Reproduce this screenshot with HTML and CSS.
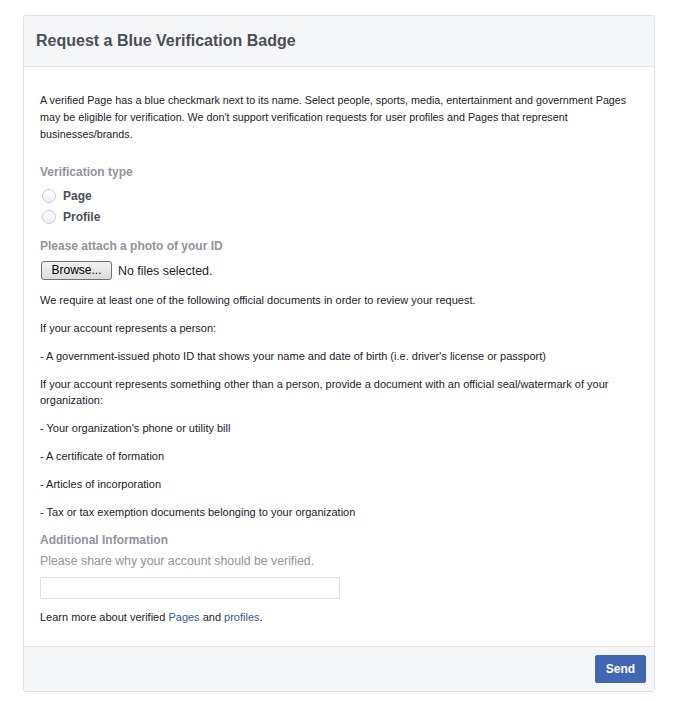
FILE: index.html
```html
<!DOCTYPE html>
<html>
<head>
<meta charset="utf-8">
<link rel="stylesheet" href="styles.css">
</head>
<body>
<div class="card">
  <div class="card-header">
    <h2 class="title">Request a Blue Verification Badge</h2>
  </div>
  <div class="card-body">
    <p class="intro">A verified Page has a blue checkmark next to its name. Select people, sports, media, entertainment and government Pages may be eligible for verification. We don't support verification requests for user profiles and Pages that represent businesses/brands.</p>

    <div class="label">Verification type</div>
    <div class="radios">
      <label class="radio-row"><span class="radio"></span><span class="radio-text">Page</span></label>
      <label class="radio-row"><span class="radio"></span><span class="radio-text">Profile</span></label>
    </div>

    <div class="label label-2">Please attach a photo of your ID</div>
    <div class="file-row">
      <span class="browse">Browse...</span>
      <span class="file-text">No files selected.</span>
    </div>

    <div class="docs">
      <p>We require at least one of the following official documents in order to review your request.</p>
      <p>If your account represents a person:</p>
      <p>- A government-issued photo ID that shows your name and date of birth (i.e. driver's license or passport)</p>
      <p>If your account represents something other than a person, provide a document with an official seal/watermark of your organization:</p>
      <p>- Your organization's phone or utility bill</p>
      <p>- A certificate of formation</p>
      <p>- Articles of incorporation</p>
      <p>- Tax or tax exemption documents belonging to your organization</p>
    </div>

    <div class="label label-3">Additional Information</div>
    <div class="hint">Please share why your account should be verified.</div>
    <div class="text-input"></div>

    <p class="learn">Learn more about verified <a href="#">Pages</a> and <a href="#">profiles</a>.</p>
  </div>
  <div class="card-footer">
    <button class="send">Send</button>
  </div>
</div>
</body>
</html>
```

FILE: styles.css
```css
html, body {
  margin: 0;
  padding: 0;
  background: #ffffff;
}

body {
  font-family: "Liberation Sans", Arial, sans-serif;
  font-size: 11px;
  color: #1d2129;
}

.card {
  margin: 15px 0 0 23px;
  width: 630px;
  border: 1px solid #dddfe2;
  border-radius: 3px;
  background: #fff;
}

.card-header {
  background: #f5f6f7;
  border-bottom: 1px solid #e5e5e5;
  height: 50px;
  padding: 0 12px;
  display: flex;
  align-items: center;
  border-radius: 3px 3px 0 0;
}

.title {
  margin: 0;
  font-size: 16px;
  font-weight: bold;
  color: #4b4f56;
}

.card-body {
  padding: 25px 16px 20px 16px;
}

.intro {
  margin: 0;
  font-size: 10.75px;
  line-height: 17px;
}

.label {
  font-weight: bold;
  color: #90949c;
  font-size: 12px;
  line-height: 17px;
  margin-top: 21px;
}

.radios {
  display: flex;
  flex-direction: column;
  margin-top: 4px;
}

.radio-row {
  display: flex;
  align-items: center;
  height: 21px;
}

.radio {
  width: 12px;
  height: 12px;
  border: 1px solid #c9cbcf;
  border-radius: 50%;
  background: linear-gradient(#ffffff, #eceef0);
  margin-left: 2px;
  margin-right: 7px;
}

.radio-text {
  font-weight: bold;
  font-size: 12px;
  color: #4b4f56;
}

.label-2 {
  margin-top: 11px;
}

.file-row {
  display: flex;
  align-items: center;
  margin-top: 6px;
}

.browse {
  display: inline-block;
  box-sizing: border-box;
  width: 71px;
  height: 19px;
  line-height: 17px;
  text-align: center;
  border: 1px solid #707070;
  border-radius: 3px;
  background: linear-gradient(#f2f2f2, #dcdcdc);
  color: #000;
  font-size: 12px;
  margin-left: 1px;
}

.file-text {
  margin-left: 6px;
  font-size: 12.4px;
  color: #1d2129;
}

.docs {
  margin-top: 1px;
}

.docs p {
  margin: 12px 0 0 0;
  line-height: 16px;
}

.label-3 {
  margin-top: 12px;
}

.hint {
  color: #90949c;
  font-size: 12.3px;
  line-height: 17px;
  margin-top: 4px;
}

.text-input {
  box-sizing: border-box;
  width: 300px;
  height: 22px;
  border: 1px solid #dddfe2;
  margin-top: 7px;
}

.learn {
  margin: 10px 0 0 0;
  line-height: 17px;
}

.learn a {
  color: #365899;
  text-decoration: none;
}

.card-footer {
  background: #f5f6f7;
  border-top: 1px solid #e5e5e5;
  height: 44px;
  display: flex;
  align-items: center;
  justify-content: flex-end;
  padding: 0 8px;
  border-radius: 0 0 3px 3px;
}

.send {
  font-family: "Liberation Sans", Arial, sans-serif;
  background: #4267b2;
  border: 1px solid #4267b2;
  border-radius: 2px;
  color: #fff;
  font-weight: bold;
  font-size: 12px;
  width: 51px;
  height: 28px;
  padding: 0;
}
```
